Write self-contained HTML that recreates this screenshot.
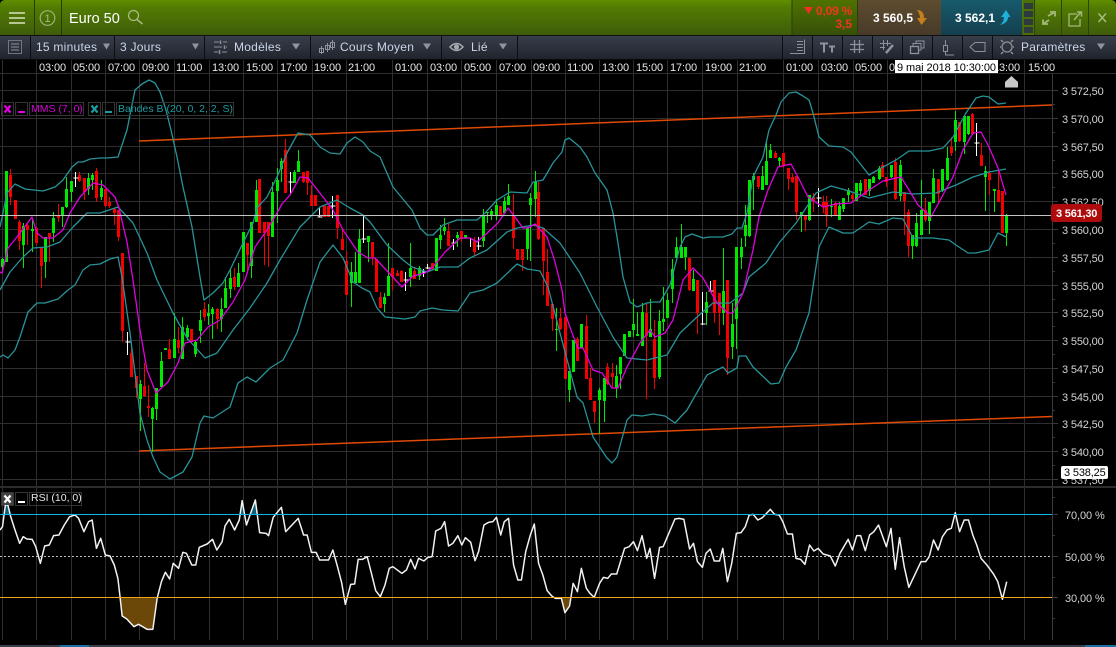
<!DOCTYPE html>
<html><head><meta charset="utf-8"><style>
html,body{margin:0;padding:0;background:#000;width:1116px;height:647px;overflow:hidden}
svg{display:block}
text{font-family:"Liberation Sans",sans-serif}
</style></head><body>
<svg width="1116" height="647" viewBox="0 0 1116 647" xmlns="http://www.w3.org/2000/svg">
<defs>
<linearGradient id="g" x1="0" y1="0" x2="0" y2="1"><stop offset="0" stop-color="#5f8f00"/><stop offset=".2" stop-color="#527c02"/><stop offset="1" stop-color="#3f5c0a"/></linearGradient>
<linearGradient id="gd" x1="0" y1="0" x2="0" y2="1"><stop offset="0" stop-color="#4f7300"/><stop offset="1" stop-color="#36500a"/></linearGradient>
<linearGradient id="br" x1="0" y1="0" x2="0" y2="1"><stop offset="0" stop-color="#5e4c30"/><stop offset="1" stop-color="#473a28"/></linearGradient>
<linearGradient id="te" x1="0" y1="0" x2="0" y2="1"><stop offset="0" stop-color="#175a6c"/><stop offset="1" stop-color="#143f4e"/></linearGradient>
<linearGradient id="tb" x1="0" y1="0" x2="0" y2="1"><stop offset="0" stop-color="#383e4a"/><stop offset="1" stop-color="#20242c"/></linearGradient>
</defs>
<rect width="1116" height="647" fill="#000"/>

<!-- top bar -->
<path d="M0 35V5Q0 0 5 0H1111Q1116 0 1116 5V35Z" fill="url(#g)"/>
<rect y="35" width="1116" height="1" fill="#111"/>
<path d="M34.500 0V35M61.500 0V35" stroke="#263a05" fill="none"/>
<path d="M9 13H25M9 18H25M9 23H25" stroke="#b6c592" stroke-width="2"/>
<circle cx="47.500" cy="18" r="7.300" fill="none" stroke="#9db274" stroke-width="1.200"/>
<text x="47.500" y="22" font-size="11" fill="#a9bb82" text-anchor="middle">1</text>
<text x="69" y="23" font-size="14.500" fill="#fff">Euro 50</text>
<circle cx="133.500" cy="15.500" r="5" fill="none" stroke="#a8ba80" stroke-width="1.300"/>
<path d="M137 19.500L142.500 24" stroke="#a8ba80" stroke-width="1.500"/>

<rect x="792" y="0" width="65" height="35" fill="url(#gd)"/>
<path d="M792 0V35M857.500 0V35" stroke="#2c3f08"/>
<path d="M804 7H813L808.500 14Z" fill="#f03020"/>
<text x="816" y="15" font-size="12" font-weight="bold" fill="#f03520" letter-spacing="-.2">0,09 %</text>
<text x="852" y="28" font-size="12" font-weight="bold" fill="#f03520" text-anchor="end">3,5</text>
<rect x="858" y="0" width="83" height="35" fill="url(#br)"/>
<text x="873" y="22" font-size="12" font-weight="bold" fill="#fff">3 560,5</text>
<path d="M917 10Q924 10 924 18H927L921.500 25L917 18H920Q920 14 917 10Z" fill="#c47f1c"/>
<rect x="941" y="0" width="81" height="35" fill="url(#te)"/>
<text x="955" y="22" font-size="12" font-weight="bold" fill="#fff">3 562,1</text>
<path d="M1000 25Q1004 22 1004 17H1001L1006 10L1010.500 17H1008Q1008 23 1000 25Z" fill="#1fb0d8"/>
<rect x="1023" y="0" width="11" height="35" fill="#4c6f08"/>
<path d="M1024 3H1033V9H1024ZM1024 11H1033V17H1024ZM1024 19H1033V25H1024ZM1024 27H1033V33H1024Z" fill="#2e3a3e"/>
<path d="M1034.500 0V35M1061.500 0V35M1088.500 0V35" stroke="#2e4306"/>
<path d="M1048 16L1055 12M1050 12H1055V16.500M1049 20L1043 24M1043 19.500V24H1048" stroke="#a4b97a" stroke-width="1.800" fill="none"/>
<path d="M1077 14H1069V26H1080V19" stroke="#a4b97a" stroke-width="1.300" fill="none"/>
<path d="M1074 20L1081 12M1077 12H1081.500V16.500" stroke="#a4b97a" stroke-width="1.500" fill="none"/>
<path d="M1098.500 13.500L1106 22M1106 13.500L1098.500 22" stroke="#a4b97a" stroke-width="1.600"/>

<!-- toolbar -->
<rect y="36" width="1116" height="23" fill="url(#tb)"/>
<rect y="59" width="1116" height="1" fill="#0a0a0a"/>
<path d="M30.500 36V59M114.500 36V59M204.500 36V59M310.500 36V59M441.500 36V59M517.500 36V59M782.500 36V59M812.500 36V59M842.500 36V59M872.500 36V59M902.500 36V59M932.500 36V59M962.500 36V59M992.500 36V59" stroke="#0c0e12"/>
<g fill="none" stroke="#8b929c" stroke-width="1">
<rect x="8.500" y="40.500" width="13" height="13" stroke="#6f7680"/>
<path d="M11 44H19M11 47H19M11 50H19"/>
<path d="M214 42H219M223 42H227M214 47H222M226 47H227M214 52H218M222 52H227" stroke-width="1"/>
<path d="M220.500 40.500V44M224.500 45.500V49M219.500 50V54" stroke-width="1.500"/>
<path d="M321.500 46V54M327.500 43V52M332.500 40V50"/>
<rect x="319.500" y="48.500" width="4" height="4"/><rect x="325.500" y="45.500" width="4" height="4"/><rect x="330.500" y="42.500" width="4" height="5"/>
</g>
<path d="M103 43.500H110L106.500 49.500ZM192 43.500H199L195.500 49.500ZM292 43.500H300L296 49.500ZM423 43.500H431L427 49.500ZM499 43.500H507L503 49.500ZM1097 43.500H1105L1101 49.500Z" fill="#8f959e"/>
<g font-size="12" fill="#c9d6ea" letter-spacing=".25">
<text x="36" y="51">15 minutes</text>
<text x="120" y="51">3 Jours</text>
<text x="234" y="51">Modèles</text>
<text x="340" y="51">Cours Moyen</text>
<text x="471" y="51">Lié</text>
<text x="1021" y="51">Paramètres</text>
</g>
<path d="M450 47Q456.500 40 463 47Q456.500 54 450 47Z" fill="none" stroke="#a3a8af" stroke-width="1.500"/>
<circle cx="456.500" cy="47" r="2.600" fill="#a3a8af"/>
<g fill="none" stroke="#8b929c" stroke-width="1.300">
<path d="M790 53.500H804.500V39.500M797 41.500H803M797 44.500H803M797 47.500H803M797 50.500H803" stroke-width="1"/>
<path d="M820 43.500H828M824 43.500V52.500M829 46.500H835M832 46.500V52.500" stroke-width="2" stroke="#8d949e"/>
<path d="M854.500 40V53M859.500 40V53M850 44.500H864M850 49.500H864"/>
<path d="M883.500 40V50M887.500 40V46M880 43.500H891M880 47.500H885" stroke-width="1"/>
<path d="M886 53L893 45" stroke-width="2.500"/>
<rect x="910.500" y="46.500" width="8" height="7"/>
<path d="M913 46V43.500H921V50H919M916 43V41H924V48H921.500" stroke-width="1"/>
<path d="M945.500 40V45M945.500 51V55H954" stroke-width="1"/>
<rect x="943.500" y="45.500" width="4" height="6" stroke-width="1"/>
<path d="M970 47L975 42.500H985V51.500H975Z" stroke-width="1"/>
<circle cx="1007" cy="47" r="5"/>
<path d="M1003 42L1001 40M1011 42L1013 40M1003 52L1001 54M1011 52L1013 54M1001 47H1000M1013 47H1014" stroke-width="1.500"/>
</g>

<!-- grid -->
<path shape-rendering="crispEdges" stroke="#2e2e2e" fill="none" d="M2.500 60V486M36.500 60V486M71.500 60V486M105.500 60V486M139.500 60V486M174.500 60V486M209.500 60V486M243.500 60V486M277.500 60V486M312.500 60V486M346.500 60V486M392.500 60V486M427.500 60V486M461.500 60V486M496.500 60V486M531.500 60V486M565.500 60V486M599.500 60V486M633.500 60V486M667.500 60V486M702.500 60V486M737.500 60V486M783.500 60V486M818.500 60V486M853.500 60V486M887.500 60V486M921.500 60V486M955.500 60V486M989.500 60V486M1024.500 60V486
M0 73.500H1116M0 90.500H1052M0 118.500H1052M0 146.500H1052M0 173.500H1052M0 201.500H1052M0 229.500H1052M0 257.500H1052M0 285.500H1052M0 312.500H1052M0 340.500H1052M0 368.500H1052M0 396.500H1052M0 423.500H1052M0 451.500H1052M0 479.500H1052"/>
<path shape-rendering="crispEdges" stroke="#3a3a3a" fill="none" d="M1052.500 74V486M1052 90.500H1058M1052 104.500H1055M1052 118.500H1058M1052 132.500H1055M1052 146.500H1058M1052 160.500H1055M1052 173.500H1058M1052 187.500H1055M1052 201.500H1058M1052 215.500H1055M1052 229.500H1058M1052 243.500H1055M1052 257.500H1058M1052 271.500H1055M1052 285.500H1058M1052 299.500H1055M1052 312.500H1058M1052 326.500H1055M1052 340.500H1058M1052 354.500H1055M1052 368.500H1058M1052 382.500H1055M1052 396.500H1058M1052 410.500H1055M1052 423.500H1058M1052 437.500H1055M1052 451.500H1058M1052 465.500H1055M1052 479.500H1058"/>
<rect y="486" width="1116" height="2" fill="#2c2c2c"/>

<!-- time labels -->
<g font-size="11" fill="#e8e8e8" letter-spacing="-.1">
<text x="39" y="71">03:00</text><text x="73" y="71">05:00</text><text x="108" y="71">07:00</text><text x="142" y="71">09:00</text><text x="176" y="71">11:00</text><text x="212" y="71">13:00</text><text x="246" y="71">15:00</text><text x="280" y="71">17:00</text><text x="314" y="71">19:00</text><text x="348" y="71">21:00</text>
<text x="395" y="71">01:00</text><text x="430" y="71">03:00</text><text x="464" y="71">05:00</text><text x="499" y="71">07:00</text><text x="533" y="71">09:00</text><text x="567" y="71">11:00</text><text x="602" y="71">13:00</text><text x="636" y="71">15:00</text><text x="670" y="71">17:00</text><text x="705" y="71">19:00</text><text x="739" y="71">21:00</text>
<text x="786" y="71">01:00</text><text x="821" y="71">03:00</text><text x="855" y="71">05:00</text><text x="889" y="71">07:00</text><text x="993" y="71">13:00</text><text x="1028" y="71">15:00</text>
</g>
<rect x="895" y="60" width="103" height="13" fill="#fff"/>
<text x="897" y="71" font-size="11" fill="#000" textLength="99">9 mai 2018 10:30:00</text>
<path d="M1005 82L1011.500 76L1018 82V87.500H1005Z" fill="#c8c8c8"/>

<!-- right axis labels -->
<g font-size="11" fill="#d4d4d4" letter-spacing="-.15">
<text x="1062" y="95">3 572,50</text><text x="1062" y="123">3 570,00</text><text x="1062" y="151">3 567,50</text><text x="1062" y="178">3 565,00</text><text x="1062" y="206">3 562,50</text><text x="1062" y="234">3 560,00</text><text x="1062" y="262">3 557,50</text><text x="1062" y="290">3 555,00</text><text x="1062" y="317">3 552,50</text><text x="1062" y="345">3 550,00</text><text x="1062" y="373">3 547,50</text><text x="1062" y="401">3 545,00</text><text x="1062" y="428">3 542,50</text><text x="1062" y="456">3 540,00</text><text x="1062" y="484">3 537,50</text>
</g>

<!-- trend lines -->
<g fill="none" stroke="#e04a02" stroke-width="1.500">
<path d="M139 141L1052 105"/><path d="M139 451L1052 416.500"/>
</g>

<!-- candles -->
<g transform="translate(.5,0)" shape-rendering="crispEdges" fill="none">
<path stroke="#00e800" d="M2 258V272M6 171V262M23 223V268M32 220V252M45 237V278M53 212V242M62 207V227M66 177V208M71 181V202M88 173V195M92 173V190M101 180V200M140 380V431M152 407V452M156 388V420M161 352V387M174 313V358M182 317V359M187 325V340M195 340V357M200 310V343M208 304V325M212 307V339M221 298V332M225 277V308M230 268V298M238 263V287M243 232V272M251 222V278M256 180V222M272 182V237M277 168V223M281 158V182M294 170V183M298 150V172M351 262V307M355 252V283M359 229V283M368 236V262M384 293V312M388 243V296M410 243V287M419 266V280M436 238V271M440 225V249M444 218V235M457 232V247M483 209V247M487 212V223M491 209V220M496 199V220M504 197V213M508 184V205M527 227V260M530 193V261M535 171V217M556 308V351M569 371V402M599 388V434M604 378V422M616 365V398M620 357V389M629 331V337M633 299V337M637 312V336M642 303V346M650 299V337M659 310V379M663 287V331M667 293V318M672 259V303M676 237V258M681 224V258M685 247V270M693 270V291M706 292V325M723 248V325M732 303V359M736 247V349M741 238V269M745 205V247M749 180V237M753 173V210M762 166V190M766 140V185M770 144V158M779 157V166M801 212V232M809 195V221M831 199V217M839 202V220M843 198V212M848 188V202M856 183V201M860 180V195M869 179V196M873 176V183M879 166V180M891 165V178M900 160V201M912 235V259M916 213V247M921 180V235M929 202V234M933 169V203M942 169V192M947 147V181M955 111V151M964 115V154M968 116V135M985 166V211M994 189V212M1006 214V246"/>
<path stroke="#00e800" stroke-width="3" d="M2 259V267M6 171V262M23 226V245M32 229V231M45 237V262M53 218V233M62 207V215M66 189V207M71 181V192M88 178V189M92 175V180M101 188V197M140 384V399M152 408V419M156 388V409M161 361V387M165 348V350M174 339V358M182 327V359M187 328V337M195 342V354M200 320V331M208 313V316M212 309V314M221 309V319M225 288V308M230 278V289M238 273V287M243 232V272M251 222V266M256 190V222M272 192V237M277 180V191M281 161V169M294 172V183M298 161V172M351 272V283M355 272V283M359 239V283M368 236V242M384 297V304M388 276V296M410 268V277M419 268V276M436 238V271M440 235V240M444 227V231M457 235V238M465 235V238M483 216V241M487 212V213M491 211V216M496 205V216M504 201V213M508 196V205M527 228V249M530 198V205M535 182V199M556 329V330M569 371V390M573 340V372M581 324V348M599 390V400M604 378V401M616 376V388M620 357V374M624 334V356M629 331V337M633 324V330M637 334V336M642 312V346M650 329V337M659 321V377M663 319V322M667 300V318M672 269V289M676 247V258M681 247V258M685 247V257M693 279V291M706 302V313M723 291V313M732 324V347M736 247V319M741 247V257M745 225V236M749 180V236M753 176V180M762 176V190M766 161V185M770 150V158M779 158V161M801 212V216M809 195V220M831 206V207M839 206V220M843 198V209M848 190V195M856 183V201M860 183V191M869 179V191M873 177V183M879 168V179M891 165V177M900 165V196M912 235V246M916 223V246M921 210V235M929 202V221M933 178V203M942 169V191M947 158V180M955 120V142M964 116V142M968 116V134M985 171V177M994 189V191M1006 215V233"/>
<path stroke="#f40000" d="M10 169V205M19 220V250M27 223V245M36 227V245M41 247V288M49 233V262M58 204V222M79 172V182M84 178V200M96 168V202M105 189V207M109 197V208M114 208V225M118 210V241M122 253V342M131 343V377M136 376V398M144 363V397M148 385V417M169 339V359M178 327V353M191 329V343M204 302V321M217 308V329M234 268V290M247 243V273M264 222V265M268 222V267M285 139V193M303 172V183M307 171V195M311 185V206M337 195V239M342 228V250M346 251V295M372 242V265M380 292V308M392 268V290M397 270V276M401 270V282M414 267V279M448 224V246M461 231V242M474 237V256M513 194V249M522 249V271M538 182V240M543 228V295M547 249V306M552 304V331M560 308V330M577 337V361M586 315V379M590 368V400M594 401V423M607 363V385M612 363V388M646 303V399M654 320V389M689 258V291M697 280V334M714 280V323M719 293V335M727 280V375M758 176V189M775 151V158M783 153V168M788 168V190M792 174V183M796 176V220M805 215V231M813 193V212M823 196V213M826 196V227M835 202V215M852 192V201M882 162V177M886 177V187M895 158V200M904 192V235M908 209V257M925 198V222M938 179V203M951 137V156M959 122V142M972 113V135M981 143V166M989 172V195M998 169V202"/>
<path stroke="#f40000" stroke-width="3" d="M10 175V197M15 200V219M19 222V241M27 225V230M36 228V243M41 247V266M49 233V237M58 216V218M79 175V181M84 178V192M96 171V198M105 189V206M109 202V206M114 209V213M118 210V237M122 253V331M131 353V377M136 376V388M144 386V396M148 406V408M169 349V359M178 340V348M191 329V342M204 309V317M217 309V319M234 277V287M247 243V255M259 179V233M264 222V233M268 222V236M285 150V193M303 172V182M307 171V183M311 195V206M315 195V206M324 206V217M328 206V217M337 195V228M342 239V250M346 261V295M372 242V257M376 259V292M380 297V308M392 268V277M397 273V276M401 271V282M414 271V279M432 263V269M448 231V246M461 231V239M474 241V252M500 206V215M513 216V238M517 249V260M522 249V260M538 192V239M543 228V261M547 272V306M552 304V319M560 318V329M565 317V379M577 339V361M586 326V379M590 378V400M594 401V412M607 367V384M612 373V377M646 313V336M654 339V378M689 258V290M697 280V313M714 280V313M719 293V313M727 280V358M758 176V187M775 153V158M783 153V166M788 168V179M792 177V182M796 176V212M805 215V220M813 197V202M823 202V206M826 202V215M835 203V215M852 195V199M865 179V195M882 165V177M886 177V182M895 162V199M904 192V201M908 212V246M925 210V220M938 179V194M951 147V153M959 122V141M972 114V134M981 155V166M989 173V180M998 190V202M1002 191V233"/>
<path stroke="#fff" d="M75 172V187M73 178H78M127 332V355M125 342H130M290 172V195M288 182H293M319 207V217M317 217H322M332 196V218M330 206H335M363 215V243M361 239H366M405 272V291M403 280H408M423 269V277M421 272H426M427 264V269M425 268H430M453 239V250M451 243H456M470 238V247M478 237V250M476 246H481M702 292V325M700 324H705M710 281V292M708 291H713M818 188V207M816 198H821M976 123V156M974 143H979"/>
</g>

<!-- bollinger -->
<g fill="none" stroke="#289398" stroke-width="1.300" stroke-linejoin="round">
<polyline points="0,227 3,213 7,193 15,184 25,189 43,191 55,187 63,180 72,167 78,162 83,162 90,159 100,158 107,158 118,157 127,130 135,90 142,84 149,80 155,83 160,92 166,110 171,130 177,157 183,187 192,227 200,277 204,300 213,293 223,283 230,270 243,243 253,223 257,208 267,197 277,177 287,153 298,133 310,135 320,147 330,153 340,154 347,143 355,137 363,142 370,151 380,157 393,187 412,210 420,228 427,235 433,235 443,225 457,220 477,220 485,213 497,200 510,192 527,193 533,182 543,180 553,163 562,152 565,140 569,138 580,147 587,157 595,173 607,190 613,213 618,243 623,277 630,302 637,307 647,303 653,302 660,302 670,285 680,247 685,237 692,234 703,238 710,237 723,237 732,234 737,228 742,228 747,213 753,177 763,157 769,130 776,115 781,102 789,93 796,92 803,96 809,100 813,113 819,137 829,146 843,147 851,152 869,175 883,167 896,160 909,151 929,151 943,148 953,137 966,113 976,98 983,96 989,97 998,104 1006,103"/>
<polyline points="0,290 10,272 23,257 33,248 47,247 60,242 73,227 87,213 100,213 118,207 133,223 147,253 157,280 173,313 187,338 205,358 217,353 233,330 250,308 267,283 280,260 300,227 320,207 337,200 350,208 363,215 370,222 387,245 403,260 412,267 427,272 440,267 458,267 470,258 487,250 507,232 517,228 533,225 543,228 560,243 580,273 597,307 613,337 627,358 647,360 667,355 680,333 697,317 713,303 730,303 743,293 749,277 766,263 779,243 796,223 816,193 831,186 849,191 869,198 893,192 913,194 936,193 956,185 973,177 989,172 1006,169"/>
<polyline points="0,357 3,355 8,358 15,350 20,337 28,312 37,303 45,303 58,299 68,290 75,285 83,270 90,265 100,264 110,259 118,257 122,277 130,333 140,413 147,440 153,457 160,472 170,479 183,472 192,457 200,423 204,416 213,418 230,407 238,383 247,377 256,382 270,368 283,360 297,333 307,300 320,262 333,245 343,258 353,282 362,288 370,292 377,308 385,317 405,319 415,317 420,311 432,308 443,310 458,311 470,293 483,290 497,283 517,264 527,269 540,271 548,287 560,333 577,397 583,403 593,437 607,458 612,463 617,457 627,420 632,415 642,416 653,414 665,416 675,423 687,410 707,375 723,367 728,373 737,368 739,356 746,356 753,367 771,384 779,383 786,367 796,350 809,313 819,247 829,227 843,233 853,233 869,222 879,224 893,218 903,219 913,238 933,238 949,240 956,245 968,253 976,253 989,250 998,233 1006,237"/>
</g>
<!-- MMS -->
<polyline fill="none" stroke="#e000e0" stroke-width="1.300" stroke-linejoin="round" points="0,272 2,273 8,248 17,237 32,217 37,233 43,238 53,238 63,230 70,213 80,197 93,183 103,185 115,197 119,208 127,242 133,280 140,330 147,370 156,393 168,382 178,363 185,343 197,340 208,327 220,320 233,302 245,280 255,247 267,230 277,213 282,204 290,195 300,177 308,178 323,197 333,210 343,230 358,252 368,258 375,258 388,272 402,287 413,276 425,273 433,267 445,252 460,238 470,238 477,242 485,235 498,223 508,208 515,217 523,228 528,228 535,224 547,237 555,262 562,290 565,313 572,333 578,348 583,348 593,370 602,373 612,388 618,388 627,367 640,343 650,330 655,337 665,333 673,320 683,280 693,268 703,278 717,303 728,313 733,313 743,293 746,280 753,250 759,217 768,190 778,167 791,164 798,177 808,197 823,207 836,204 851,203 866,192 883,181 901,177 909,190 918,205 931,217 944,193 953,177 963,150 973,133 981,132 989,147 998,168 1006,195"/>

<!-- crosshair -->
<rect x="0" y="215" width="1052" height="1" fill="#c4c4c4"/>
<rect x="1051" y="204" width="51" height="18" rx="3" fill="#ae0c0c"/>
<text x="1056" y="217" font-size="11" font-weight="bold" fill="#fff" letter-spacing="-.2">3 561,30</text>
<rect x="1061" y="466" width="47" height="13" rx="2" fill="#fff"/>
<text x="1064" y="476" font-size="11" fill="#000" letter-spacing="-.15">3 538,25</text>

<!-- legends -->
<g fill="none" stroke="#353535" shape-rendering="crispEdges">
<rect x="1.500" y="102.500" width="12" height="13"/><rect x="15.500" y="102.500" width="12" height="13"/><rect x="29.500" y="102.500" width="54" height="13"/>
<rect x="88.500" y="102.500" width="12" height="13"/><rect x="102.500" y="102.500" width="12" height="13"/><rect x="116.500" y="102.500" width="117" height="13"/>
<rect x="1.500" y="492.500" width="12" height="13"/><rect x="15.500" y="492.500" width="12" height="13"/><rect x="29.500" y="492.500" width="52" height="13"/>
</g>
<path d="M4.500 105.500L10.500 112.500M10.500 105.500L4.500 112.500" stroke="#e000e0" stroke-width="2.200"/>
<rect x="18" y="111" width="7" height="2" fill="#e000e0"/>
<text x="31" y="112" font-size="10.500" fill="#d800d8">MMS (7, 0)</text>
<path d="M91.500 105.500L97.500 112.500M97.500 105.500L91.500 112.500" stroke="#1f9a9f" stroke-width="2.200"/>
<rect x="105" y="111" width="7" height="2" fill="#1f9a9f"/>
<text x="118" y="112" font-size="10.500" fill="#1f9a9f">Bandes B (20, 0, 2, 2, S)</text>

<!-- RSI -->
<path shape-rendering="crispEdges" stroke="#2e2e2e" fill="none" d="M2.500 488V640M36.500 488V640M71.500 488V640M105.500 488V640M139.500 488V640M174.500 488V640M209.500 488V640M243.500 488V640M277.500 488V640M312.500 488V640M346.500 488V640M392.500 488V640M427.500 488V640M461.500 488V640M496.500 488V640M531.500 488V640M565.500 488V640M599.500 488V640M633.500 488V640M667.500 488V640M702.500 488V640M737.500 488V640M783.500 488V640M818.500 488V640M853.500 488V640M887.500 488V640M921.500 488V640M955.500 488V640M989.500 488V640M1024.500 488V640"/>
<path shape-rendering="crispEdges" stroke="#3a3a3a" fill="none" d="M1052.500 488V640M1052 497.500H1055M1052 514.500H1058M1052 535.500H1055M1052 556.500H1058M1052 577.500H1055M1052 597.500H1058M1052 618.500H1055"/>
<g transform="translate(0,470) scale(.35714,.33333)">
<polygon fill="#6b4708" points="337,382 342,438 355,447 375,470 388,463 412,478 428,478 441,382"/>
<polygon fill="#0b5f78" points="11,133 15,105 22,105 28,133"/>
<polygon fill="#0b5f78" points="674,133 678,92 684,133"/>
<polygon fill="#0b5f78" points="702,133 715,90 721,133"/>
<polyline fill="none" stroke="#f2f2f2" stroke-width="1.500" vector-effect="non-scaling-stroke" stroke-linejoin="round" points="0,180 7,170 15,105 22,105 30,140 42,180 55,220 65,200 75,207 90,208 100,230 113,280 125,228 138,225 150,197 165,195 180,165 195,140 210,135 220,145 235,185 248,155 258,150 270,235 282,205 295,255 308,258 320,285 330,325 335,370 342,438 355,447 375,470 388,463 412,478 428,478 440,385 452,335 463,307 475,327 485,280 500,295 512,247 522,250 537,285 548,285 558,232 580,222 595,208 607,240 622,215 630,168 642,148 657,180 670,150 678,92 690,165 715,90 727,188 745,190 752,197 765,142 788,112 800,185 835,145 850,195 860,195 872,247 885,247 895,270 920,270 932,240 945,290 957,340 967,403 982,343 993,342 1003,268 1015,268 1028,260 1040,310 1052,362 1065,380 1078,345 1090,295 1100,290 1125,310 1138,300 1150,268 1162,297 1172,265 1187,273 1198,262 1210,260 1220,183 1235,175 1245,155 1256,228 1268,220 1282,197 1293,225 1303,203 1318,217 1330,272 1340,245 1355,165 1368,157 1380,155 1390,142 1402,195 1412,155 1424,145 1438,285 1450,330 1460,330 1472,245 1485,195 1496,162 1508,280 1520,315 1532,362 1545,378 1555,385 1568,385"/>
</g>
<g transform="translate(556,470) scale(.35714,.33333)">
<polygon fill="#6b4708" points="13,383 25,428 38,408 41,383"/>
<polyline fill="none" stroke="#f2f2f2" stroke-width="1.500" vector-effect="non-scaling-stroke" stroke-linejoin="round" points="0,383 15,385 25,428 38,408 48,340 60,365 71,295 85,355 95,370 107,382 122,340 133,322 145,325 155,312 170,312 192,235 205,230 217,215 228,242 241,197 254,265 263,235 276,325 290,232 300,230 333,147 345,145 358,148 374,237 385,220 396,275 410,292 420,250 432,237 443,273 458,273 467,235 480,335 492,280 505,190 518,188 530,170 541,135 552,133 565,150 578,143 600,118 612,133 625,135 635,155 648,192 662,192 672,265 685,268 697,283 710,225 722,243 734,235 748,252 768,258 782,288 795,250 818,208 830,240 842,197 853,197 866,242 878,195 890,185 903,165 925,230 938,175 950,298 962,203 975,290 988,352 1022,275 1035,275 1045,260 1057,210 1070,240 1082,200 1095,180 1107,175 1118,128 1130,185 1143,150 1155,150 1167,195 1178,225 1190,265 1205,283 1225,312 1237,335 1250,388 1262,335"/>
</g>
<rect x="0" y="514" width="1052" height="1" fill="#12b4f0"/>
<path d="M0 556.500H1052" stroke="#bdbdbd" stroke-dasharray="2 2"/>
<rect x="0" y="597" width="1052" height="1" fill="#f2a31e"/>
<g font-size="11" fill="#d4d4d4" letter-spacing="-.1"><text x="1065" y="519">70,00 %</text><text x="1065" y="561">50,00 %</text><text x="1065" y="602">30,00 %</text></g>
<rect x="2" y="493" width="11" height="12" fill="#444"/>
<path d="M4.500 495.500L10.500 502.500M10.500 495.500L4.500 502.500" stroke="#fff" stroke-width="2.200"/>
<rect x="18" y="501" width="7" height="2" fill="#fff"/>
<text x="31" y="501" font-size="10.500" fill="#e8e8e8">RSI (10, 0)</text>

<!-- bottom strip -->
<rect y="645" width="1116" height="2" fill="#3a4049"/>
<rect x="60" y="645" width="29" height="2" fill="#1b6fa0"/>
<rect x="1085" y="645" width="31" height="2" fill="#1b6fa0"/>
</svg>
</body></html>
